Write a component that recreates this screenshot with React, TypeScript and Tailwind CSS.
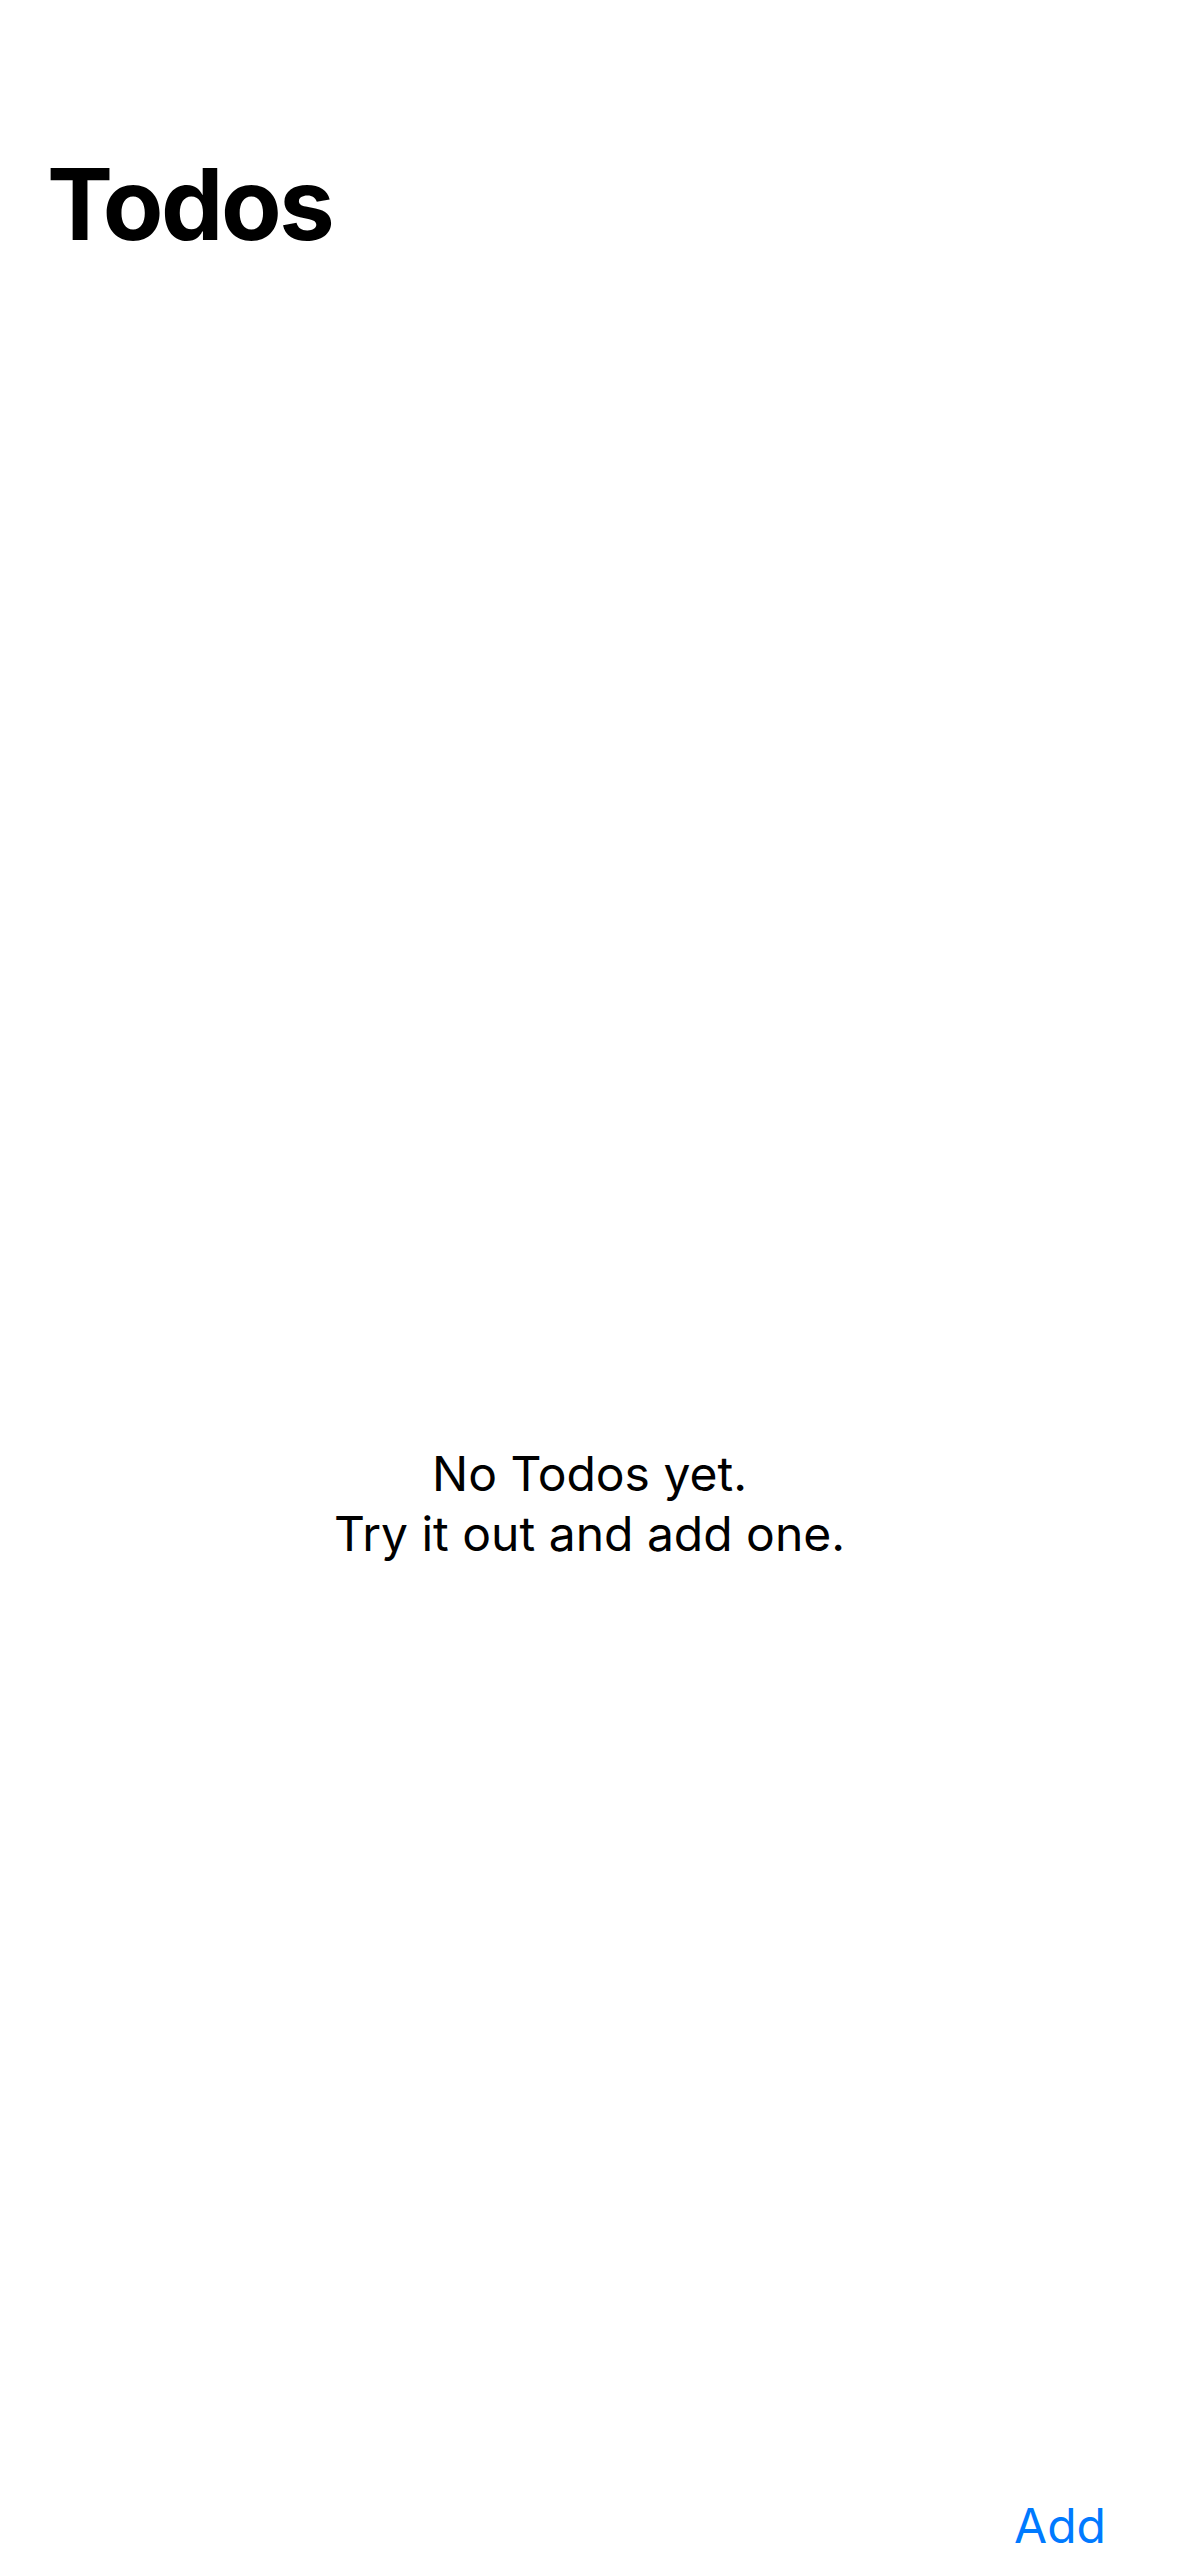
export default function App() {
  return (
    <div className="flex h-[2556px] w-full flex-col overflow-hidden bg-white font-['Inter','Liberation_Sans',sans-serif] text-black">
      {/* large nav title */}
      <header className="px-[47px] pt-[155px]">
        <h1 className="text-[99px] leading-none font-bold tracking-[-2.5px]">Todos</h1>
      </header>

      {/* empty state */}
      <main className="mt-[1190px] flex flex-col items-center text-center text-[48px] leading-[60px]">
        <p>No Todos yet.</p>
        <p>Try it out and add one.</p>
      </main>

      <div className="flex-1" />

      {/* bottom toolbar */}
      <footer className="flex justify-end px-[73px] pb-[0px]">
        <button className="text-[48px] leading-[60px] text-[#007aff]">Add</button>
      </footer>
    </div>
  );
}
